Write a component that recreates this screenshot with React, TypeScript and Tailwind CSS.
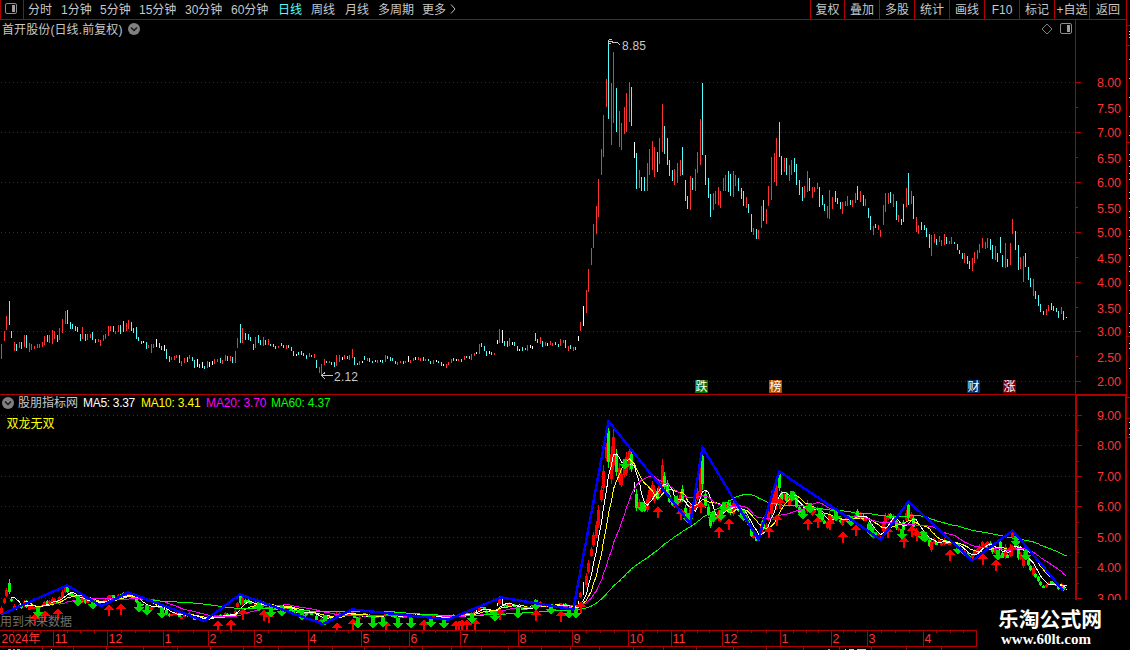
import React from "react";

type Bar = { x: number; top: number; bottom: number; kind: string };

// Each block holds an origin (px) and bars as x,top,bottom[kind] in thirds of a pixel.
const BLOCKS: { ox: number; oy: number; rows: string }[] = [
  {
    ox: 0,
    oy: 290,
    rows:
      "4,162,207r 13,123,153r 19,78,120r 28,33,105c 34,123,144c 43,156,183r 49,162,183c 58,156,174r 64,156,177c 73,135,171r 79,135,174c 88,159,186r 94,162,180r 103,168,177r 112,162,174r 118,162,174r 127,156,171r 133,138,165r 142,135,156c 148,135,159r 157,120,162r 163,123,147r 172,135,156c 178,114,150r 187,87,129r 196,63,102r 202,60,102c 211,96,117c 217,102,117c 226,108,123c 232,111,126c 241,132,153c 247,111,147r 256,132,153c 262,132,150r 270,132,144r 277,126,150c 286,147,159c 295,147,156r 301,150,168r 310,135,153r 316,132,147r 325,108,138r 331,108,123r 340,108,126c 346,123,132r 355,105,126r 361,105,132c 370,93,126c 379,99,123r 385,90,117r 394,96,123c 400,114,129c 409,111,147c 415,141,153c 424,153,162c 430,153,159w 439,156,177c 445,165,174r 454,162,189r 460,162,174r 469,147,171w 478,159,174c 484,168,180c 493,165,183w 499,177,207c 508,198,216c 514,201,210r 523,198,210r 529,195,204r 538,195,219c 544,213,228r 553,204,219r 562,201,216c 568,195,207r 577,201,213c 583,210,234c 592,207,231w 598,222,234c 607,216,234w 613,228,237c 622,213,234r 628,216,231w 637,213,225w 643,207,222r 652,207,216r 661,204,219c 667,210,222r 676,195,213r 682,198,213c 691,198,213r 697,201,219c 706,183,219r 712,144,174r 721,102,159c 727,114,159r 736,129,150c 745,132,150c 751,141,153c 760,162,180c 766,141,174r 775,135,159c 781,150,165c 790,141,168r 796,150,165c 805,147,165r 811,162,168c 820,162,171c 826,168,177c 835,168,174r 844,159,168c 850,165,174c 859,165,177r 865,165,174c 874,171,183c 880,183,198c 889,192,198w 895,186,195c 904,183,195c 910,189,198c 919,195,207c 928,189,201r 934,195,201c 943,192,204r 949,210,234c 958,231,249r 964,222,256r 973,207,225r 979,213,219c 988,213,219r",
  },
  {
    ox: 300,
    oy: 290,
    rows:
      "94,216,225c 103,216,231c 109,195,228r 118,195,216r 127,201,210w 133,195,207r 142,198,207c 148,195,210r 157,177,204r 163,201,225c 172,219,225c 178,213,224r 187,213,219w 193,198,210c 202,204,213r 208,204,216c 217,213,219c 226,210,216c 232,210,219r 241,210,216w 247,210,219c 256,195,216r 262,198,207c 270,201,213c 277,204,213c 286,213,222c 292,216,225r 301,213,219r 310,213,222c 316,213,219r 325,198,216w 331,210,219r 340,204,213r 346,201,210w 355,201,210r 361,204,213r 370,201,213c 376,207,213r 385,207,213c 391,213,222c 400,210,222r 409,210,216w 415,213,219c 424,216,228c 430,222,228w 439,222,234r 445,216,225r 454,207,219r 460,204,213c 469,207,213w 475,207,213r 484,207,216c 493,198,210r 499,198,204c 508,198,207c 514,192,210r 523,189,198r 529,186,192w 538,162,192r 544,159,171c 553,168,183c 559,183,198c 568,183,192w 574,186,195c 583,189,195r 592,150,162w 598,117,159r 607,120,159w 613,153,168c 622,153,171c 628,144,168r 637,156,165w 643,156,168c 652,168,183c 658,177,183w 667,171,183c 676,174,180c 682,165,183r 691,165,174w 697,168,177w 706,129,153c 712,147,159c 721,141,162r 727,153,171c 736,156,168r 742,159,168w 751,153,165r 757,159,168r 766,156,165c 775,162,171c 781,147,168r 790,150,159r 796,150,174c 805,168,183r 811,165,177c 820,171,183r 826,171,180c 835,138,153w 841,96,123r 850,48,108w 859,0,69r",
  },
  {
    ox: 570,
    oy: 30,
    rows:
      "55,717,786r 64,654,705r 70,582,654r 79,528,612r 85,447,561r 94,357,435r 100,255,381r 109,147,231r 115,36,267c 124,159,345r 130,66,279r 139,174,306c 148,243,351r 154,279,360r 163,231,312r 169,189,306r 178,156,276r 184,171,288c 193,336,384w 199,369,477c 208,420,474r 214,441,483c 223,441,483c 232,399,483r 238,357,435r 247,333,420r 253,351,441r 262,366,426c 268,324,402r 277,222,366r 283,288,372c 292,324,405c 298,390,438c 307,420,453c 313,417,465r 322,399,459r 331,390,438r 337,351,435c 346,450,513c 352,498,537c 361,438,540r 367,444,480c 376,417,483r 382,366,429r 391,267,405r 397,159,375c 406,375,465c 415,444,504c 421,492,561c 430,489,540r 436,483,522r 445,471,525r 451,483,534r 460,444,483r 466,435,483r 475,423,486c 481,432,498c 490,423,501r 496,435,468r 505,444,483c 514,474,507c 520,483,528c 529,501,534r 535,522,549c 544,552,606c 550,594,615r 559,597,627c 565,600,627r 574,528,594r 580,510,573c 589,537,582r 595,468,528r 604,381,510r 613,369,456r 619,324,468r 628,276,381c 634,378,435c 643,384,426r 649,384,435c 658,405,453r 664,390,435r 673,384,426c 679,402,465c 688,450,495c 697,471,513c 703,468,504r 712,423,486r 718,444,483c 727,471,504r 733,471,486r 742,459,477r 748,471,531c 757,495,525c 763,522,543c 772,528,564r 778,480,567r 787,501,537r",
  },
  {
    ox: 830,
    oy: 160,
    rows:
      "16,93,126c 22,114,132c 31,126,147c 37,126,162r 46,123,138r 52,108,138r 61,120,135c 67,120,141r 76,99,129r 82,78,120c 91,93,126r 100,105,138c 106,117,138r 115,144,174c 121,168,210c 130,198,225r 136,192,204c 145,195,210r 151,210,231r 160,135,195r 166,99,156r 175,99,132r 181,96,129c 190,102,141r 199,123,180c 205,165,186r 214,177,195c 220,132,186c 229,84,141r 235,39,135c 244,93,132r 250,108,177c 259,171,216r 265,195,222r 274,186,210c 283,195,210c 289,204,231c 298,222,264c 304,225,288r 313,222,249r 319,237,255c 328,228,246r 334,240,258r 343,222,255r 349,231,252c 358,243,252r 364,231,252r 373,246,252c 382,252,270c 388,270,282c 397,279,297c 403,279,309r 412,288,312c 418,303,327c 427,294,333r 433,276,309r 442,270,297r 448,252,279r 457,234,264r 466,246,267r 472,234,264r 481,237,270c 487,255,297c 496,258,300r 502,279,306c 511,231,279c 517,285,321c 526,249,324r 532,297,321c 541,249,315r 547,177,222r 556,213,270c 565,255,330c 571,291,327r 580,288,366r 586,279,321c 595,321,360c 601,354,381c 610,357,408r 616,393,417c 625,405,438c 631,432,456c 640,453,465c 649,447,465r 655,435,453r 664,429,450c 670,438,453c 679,444,456c 685,453,474c 694,441,462r 700,453,480c 709,471,474w",
  },
];

const BARS: Bar[] = BLOCKS.flatMap(({ ox, oy, rows }) =>
  rows.split(" ").map((r) => {
    const kind = r.slice(-1);
    const [x, a, b] = r.slice(0, -1).split(",").map(Number);
    return { x: ox + Math.floor(x / 3), top: oy + Math.round(a / 3), bottom: oy + Math.round(b / 3), kind };
  }),
);

const UPPER: Record<string, string> = { r: "#ff3232", c: "#54fcfc", w: "#ffffff" };
const LOWER: Record<string, string> = { r: "#ff0000", c: "#00ff00", w: "#ffffff" };

const toLower = (y: number) => 445.3 + (y - 82) * 0.6118;

const CLOSES = BARS.map((b) => {
  const f = b.kind === "r" ? 0.3 : b.kind === "c" ? 0.72 : 0.5;
  return toLower(b.top + (b.bottom - b.top) * f);
});

function average(n: number) {
  const pts: string[] = [];
  for (let i = n - 1; i < CLOSES.length; i++) {
    let s = 0;
    for (let k = 0; k < n; k++) s += CLOSES[i - k];
    pts.push(`${BARS[i].x + 0.5},${(s / n).toFixed(1)}`);
  }
  return pts.join(" ");
}

const ZIGZAG =
  "1.7,614.3 67.3,585.3 101,606 128.3,592.5 204.3,621 240,594.5 322.7,624 352.3,609.5 448.3,619.5 501,597.5 573.3,609.5 608.5,421 690.3,523.5 702.5,447.5 758.3,539.5 779.3,471.5 880.7,539.5 908.5,501.5 972.3,560.5 1012.7,530.5 1063,590.5";

const UPS: [number, number][] = [
  [35, 613], [45, 610], [58, 608], [109, 604], [121, 603], [218, 620], [231, 619], [243, 608], [264, 609], [269, 611],
  [337, 622], [353, 618], [386, 620], [424, 619], [456, 620], [459, 620], [462, 619], [467, 619], [475, 618], [500, 608],
  [536, 609], [561, 610], [581, 601], [658, 506], [681, 508], [701, 501], [719, 526], [729, 518], [769, 526], [777, 514],
  [780, 497], [808, 518], [818, 516], [830, 518], [843, 531], [856, 524], [888, 526], [904, 536], [912, 525], [917, 529],
  [950, 549], [983, 553], [996, 559], [1012, 544],
];

const DOWNS: [number, number][] = [
  [38, 618], [78, 607], [93, 610], [139, 613], [147, 616], [162, 619], [259, 612], [271, 618], [282, 617], [302, 621],
  [325, 626], [358, 629], [373, 629], [383, 628], [398, 629], [411, 629], [431, 628], [444, 629], [472, 624], [495, 622],
  [518, 619], [536, 611], [551, 615], [569, 619], [576, 619], [625, 470], [642, 513], [676, 507], [688, 524], [713, 523],
  [721, 521], [724, 513], [743, 521], [792, 502], [803, 520], [810, 514], [820, 520], [836, 522], [851, 527], [870, 534],
  [872, 538], [902, 540], [923, 542], [925, 543], [958, 555], [998, 561], [1016, 547], [1026, 561],
];

const DOTS = "1 3";
const U_GRID = [82, 132, 182, 232, 282, 331, 381];
const L_GRID = [415, 445, 476, 506, 537, 567, 598];
const FONT = "font-['Liberation_Sans','Noto_Sans_CJK_SC',sans-serif]";

function Grid({ rows }: { rows: number[] }) {
  return (
    <g stroke="#9c0000" strokeWidth="1" strokeDasharray={DOTS}>
      {rows.map((y) => (
        <line key={y} x1="1" x2="1075" y1={y + 0.5} y2={y + 0.5} />
      ))}
    </g>
  );
}

function PanelIcon({ className }: { className: string }) {
  return (
    <svg className={className} width="13" height="12" viewBox="0 0 13 12" fill="none">
      <rect x="0.5" y="0.5" width="11" height="10" rx="1.5" stroke="#8c8c8c" />
      <rect x="7" y="2" width="3" height="7" fill="#a0a0a0" />
    </svg>
  );
}

function Round({ className }: { className: string }) {
  return (
    <svg className={className} width="12" height="12" viewBox="0 0 12 12">
      <circle cx="6" cy="6" r="6" fill="#808080" />
      <path d="M3 4.5 6 7.5 9 4.5" fill="none" stroke="#181818" strokeWidth="1.5" />
    </svg>
  );
}

const PERIODS: [string, string][] = [
  ["分时", "w-[33px]"],
  ["1分钟", "w-[39px]"],
  ["5分钟", "w-[39px]"],
  ["15分钟", "w-[46px]"],
  ["30分钟", "w-[46px]"],
  ["60分钟", "w-[47px]"],
  ["日线", "w-[33px] text-[#54fcfc]"],
  ["周线", "w-[34px]"],
  ["月线", "w-[33px]"],
  ["多周期", "w-[44px]"],
  ["更多", "w-[28px]"],
];

const ACTIONS: [string, string][] = [
  ["复权", "w-[34px]"],
  ["叠加", "w-[35px]"],
  ["多股", "w-[35px]"],
  ["统计", "w-[35px]"],
  ["画线", "w-[35px]"],
  ["F10", "w-[35px]"],
  ["标记", "w-[35px]"],
  ["+自选", "w-[35px]"],
  ["返回", "w-[37px]"],
];

function Header() {
  return (
    <header className="flex h-[20px] w-[1127px] border-b border-r border-[#b00000] text-[12px] leading-[20px] text-[#c8c8c8]">
      <div className="mr-[4px] h-[19px] w-[24px] border-x border-[#b00000]">
        <PanelIcon className="mt-[3px] ml-[4px]" />
      </div>
      {PERIODS.map(([t, w]) => (
        <span key={t} className={`shrink-0 whitespace-nowrap ${w}`}>
          {t}
        </span>
      ))}
      <svg width="6" height="19" viewBox="0 0 6 19" fill="none" stroke="#c0c0c0">
        <path d="M1 4.5 5 9 1 13.5" />
      </svg>
      <div className="ml-auto flex h-[19px]">
        {ACTIONS.map(([t, w]) => (
          <span key={t} className={`border-l border-[#b00000] text-center whitespace-nowrap ${w}`}>
            {t}
          </span>
        ))}
      </div>
    </header>
  );
}

function PriceChart() {
  return (
    <svg className="[grid-area:1/1]" width="1075" height="374" viewBox="0 20 1075 374" shapeRendering="crispEdges">
      <Grid rows={U_GRID} />
      {BARS.map((b, i) => (
        <rect key={i} x={b.x} y={b.top} width="1" height={Math.max(1, b.bottom - b.top)} fill={UPPER[b.kind]} />
      ))}
      <g stroke="#c8c8c8" fill="none">
        <path d="M609 41.5h2l3 1h3l3 2M609 39.5h3M608.5 40v3l2 1" />
        <path d="M321 375.5h12M325 372.5l-3.5 3 3.5 3.5" />
      </g>
      <g fill="#c8c8c8" fontSize="12" shapeRendering="auto">
        <text x="622" y="50" textLength="24">8.85</text>
        <text x="334" y="381" textLength="24">2.12</text>
      </g>
      {[
        [695, "跌", "#007800"],
        [769, "榜", "#b05000"],
        [967, "财", "#003366"],
        [1003, "涨", "#800000"],
      ].map(([x, t, c]) => (
        <g key={t}>
          <rect x={x} y="380" width="13" height="13" fill={c as string} />
          <text x={Number(x) + 0.5} y="391" fontSize="12" fill="#ffffff">
            {t}
          </text>
        </g>
      ))}
    </svg>
  );
}

function IndicatorChart() {
  return (
    <svg className="[grid-area:1/1]" width="1075" height="235" viewBox="0 395 1075 235" shapeRendering="crispEdges">
      <Grid rows={L_GRID} />
      {BARS.map((b, i) => {
        const t = toLower(b.top);
        const h = toLower(b.bottom) - t;
        const body = b.kind === "w" ? 0 : Math.max(2, h * 0.65);
        return (
          <g key={i} fill={LOWER[b.kind]}>
            <rect x={b.x} y={t} width="1" height={Math.max(1, h)} />
            {body > 0 && <rect x={b.x - 1} y={t + h * 0.22} width="3" height={body} />}
          </g>
        );
      })}
      <g fill="none" strokeWidth="1">
        <polyline points={average(5)} stroke="#ffffff" />
        <polyline points={average(10)} stroke="#ffff00" />
        <polyline points={average(20)} stroke="#ff00ff" />
        <polyline points={average(60)} stroke="#00ff00" />
      </g>
      {UPS.map(([x, y], i) => (
        <path key={`u${i}`} d={`M${x} ${y}l5 6h-4v6h-2v-6h-4z`} fill="#ff0000" />
      ))}
      {DOWNS.map(([x, y], i) => (
        <path key={`d${i}`} d={`M${x} ${y}l5 -6h-3v-5h-4v5h-3z`} fill="#00dc00" />
      ))}
      <polyline points={ZIGZAG} fill="none" stroke="#0000ff" strokeWidth="2.5" strokeLinejoin="round" />
    </svg>
  );
}

function Scale({ rows, labels, from, height, half }: { rows: number[]; labels: [number, string][]; from: number; height: number; half: number[] }) {
  return (
    <svg width="48" height={height} viewBox={`0 ${from} 48 ${height}`} className="block">
      <g fill="#b00000" shapeRendering="crispEdges">
        {rows.map((y) => (
          <rect key={y} x="0" y={y} width="5" height="1" />
        ))}
        {half.map((y) => (
          <rect key={y} x="0" y={y} width="2" height="1" />
        ))}
      </g>
      <g fill="#ff3232" fontSize="12.5">
        {labels.map(([y, t]) => (
          <text key={t} x={from === 20 ? 21 : 20} y={y} textLength="24">
            {t}
          </text>
        ))}
      </g>
    </svg>
  );
}

const MONTHS: [number, string][] = [
  [0, "2024年"], [53, "11"], [107, "12"], [163, "1"], [208, "2"], [254, "3"], [308, "4"], [361, "5"], [409, "6"], [460, "7"],
  [518, "8"], [572, "9"], [628, "10"], [671, "11"], [722, "12"], [780, "1"], [831, "2"], [867, "3"], [923, "4"],
];

const FOOT_TICKS = [
  42, 73, 106, 143, 177, 210, 243, 278, 308, 332, 364, 389, 422, 451, 481, 508, 541, 570, 599, 633, 663, 696, 733, 766, 803, 839, 871, 906, 941,
];

function MonthAxis() {
  return (
    <svg className="block" width="980" height="20" viewBox="0 630 980 20">
      <g fill="#b00000" shapeRendering="crispEdges">
        <rect x="0" y="630" width="977" height="1" />
        <rect x="0" y="646" width="977" height="1" />
        <rect x="976" y="630" width="1" height="17" />
        {MONTHS.map(([x], i) => {
          const end = i + 1 < MONTHS.length ? MONTHS[i + 1][0] : 976;
          const n = Math.max(2, Math.round((end - x) / 13));
          return (
            <g key={x}>
              {x > 0 && <rect x={x} y="630" width="1" height="17" />}
              {Array.from({ length: n - 1 }, (_, k) => (
                <rect key={k} x={Math.round(x + ((end - x) * (k + 1)) / n)} y="631" width="1" height="2" />
              ))}
            </g>
          );
        })}
        {FOOT_TICKS.map((x) => (
          <rect key={x} x={x} y="647" width="1" height="3" />
        ))}
      </g>
      <g fill="#a0a0a0">
        <rect x="8" y="649" width="3" height="1" />
        <rect x="13" y="649" width="2" height="1" />
        <rect x="17" y="649" width="3" height="1" />
        <rect x="51" y="649" width="1" height="1" />
        <rect x="828" y="649" width="2" height="1" />
        <g fill="#54fcfc">
          <rect x="845" y="649" width="1" height="1" />
          <rect x="849" y="649" width="5" height="1" />
          <rect x="857" y="649" width="9" height="1" />
        </g>
      </g>
      <g fill="#ff3232" fontSize="12">
        {MONTHS.map(([x, t]) => (
          <text key={x} x={x + 1.5} y="643" fontSize={x ? 12.5 : 12}>
            {t}
          </text>
        ))}
      </g>
    </svg>
  );
}

const EDGE_TICKS = [25, 45, 142, 239, 336, 397, 418, 437];
const EDGE_MARKS = [
  31, 34, 37, 59, 78, 97, 116, 135, 154, 160, 166, 173, 179, 192, 198, 211, 217, 230, 236, 248, 255, 266, 271, 285, 290, 313, 326, 332, 343, 348, 368, 422, 428, 434,
];

function EdgeStrip() {
  return (
    <svg width="3" height="580" viewBox="0 20 3 580" shapeRendering="crispEdges">
      {EDGE_TICKS.map((y) => (
        <rect key={y} x="0" y={y} width="3" height="1" fill="#b00000" />
      ))}
      {EDGE_MARKS.map((y) => (
        <rect key={y} x="2" y={y} width="1" height="1" fill="#c8c8c8" />
      ))}
    </svg>
  );
}

const VALUES: [string, string][] = [
  ["MA5: 3.37", "w-[58px] text-white tracking-[-0.3px]"],
  ["MA10: 3.41", "w-[65px] text-[#ffff00] tracking-[-0.2px]"],
  ["MA20: 3.70", "w-[65px] text-[#ff00ff] tracking-[-0.1px]"],
  ["MA60: 4.37", "w-[65px] text-[#00ff00] tracking-[-0.2px]"],
];

export default function App() {
  return (
    <main className={`h-[650px] w-[1130px] overflow-hidden bg-black text-[12px] ${FONT}`}>
      <Header />
      <div className="flex h-[580px]">
        <div className="w-[1126px]">
          <section className="flex h-[374px]">
            <div className="grid w-[1075px]">
              <PriceChart />
              <div className="z-10 flex h-[18px] items-center self-start pl-[2px] text-[#c8c8c8] [grid-area:1/1]">
                <span className="w-[126px] pt-[2px] whitespace-nowrap tracking-[0.1px]">首开股份(日线.前复权)</span>
                <Round className="" />
                <svg className="mr-[7px] ml-auto" width="12" height="12" viewBox="0 0 12 12">
                  <path d="M6 1 11 6 6 11 1 6z" fill="none" stroke="#808080" />
                </svg>
                <PanelIcon className="mr-[2px]" />
              </div>
            </div>
            <div className="w-[51px] border-l border-[#b00000]">
              <Scale
                from={20}
                height={374}
                rows={U_GRID}
                half={[107, 157, 207, 257, 307, 356]}
                labels={[
                  [87, "8.00"], [113, "7.50"], [137, "7.00"], [163, "6.50"], [187, "6.00"], [213, "5.50"], [237, "5.00"],
                  [263, "4.50"], [287, "4.00"], [313, "3.50"], [336, "3.00"], [362, "2.50"], [386, "2.00"],
                ]}
              />
            </div>
          </section>
          <section className="flex h-[236px] border-t border-[#b00000]">
            <div className="grid w-[1075px]">
              <IndicatorChart />
              <div className="z-10 flex flex-col [grid-area:1/1]">
                <div className="flex h-[16px] items-center pl-[2px] whitespace-nowrap">
                  <Round className="mr-[4px]" />
                  <span className="w-[65px] text-[#c8c8c8]">股朋指标网</span>
                  {VALUES.map(([t, c]) => (
                    <span key={t} className={c}>
                      {t}
                    </span>
                  ))}
                </div>
                <span className="pt-[4px] pl-[6.5px] leading-[18px] text-[#ffff00]">双龙无双</span>
                <span className="mt-auto leading-[16px] text-[#707070]">用到未来数据</span>
              </div>
            </div>
            <div className="h-[205px] w-[52px] border-x-2 border-t border-[#b00000]">
              <Scale
                from={396}
                height={204}
                rows={L_GRID}
                half={[430, 461, 491, 522, 552, 583]}
                labels={[[420, "9.00"], [450, "8.00"], [481, "7.00"], [511, "6.00"], [542, "5.00"], [572, "4.00"], [603, "3.00"]]}
              />
            </div>
          </section>
        </div>
        <div className="h-[580px] w-[4px] border-l border-[#b00000]">
          <EdgeStrip />
        </div>
      </div>
      <div className="flex h-[50px] items-end">
        <MonthAxis />
        <div className="flex h-[50px] w-[150px] flex-col pt-[6px] pl-[18px] font-bold text-white">
          <span className="text-[20.8px] leading-[27px] whitespace-nowrap">乐淘公式网</span>
          <span className="pl-[3px] font-['Liberation_Serif',serif] text-[15px] leading-[13px]">www.60lt.com</span>
        </div>
      </div>
    </main>
  );
}
